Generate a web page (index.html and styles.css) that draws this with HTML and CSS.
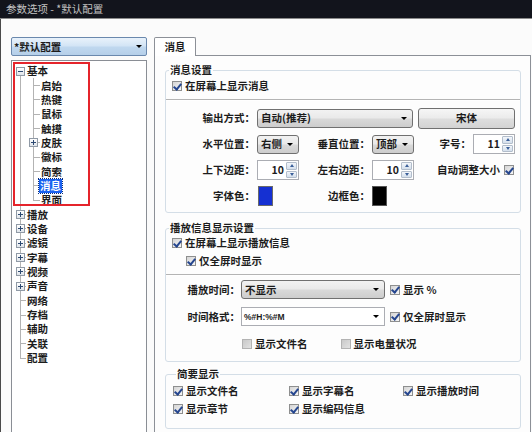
FILE: index.html
```html
<!DOCTYPE html>
<html lang="zh-CN">
<head>
<meta charset="utf-8">
<title>参数选项</title>
<link rel="stylesheet" href="styles.css">
</head>
<body>
<div class="win">
  <div class="titlebar">参数选项 - *默认配置</div>
  <div class="content">
    <div class="side">
      <div class="profile"><span>*默认配置</span><i class="arr"></i></div>
      <div class="tree">
        <div class="tr"><span class="g1 first"><i class="exp"></i></span><span class="lbl">基本</span></div>
        <div class="tr"><span class="g1 v"></span><span class="g2 t"></span><span class="lbl">启始</span></div>
        <div class="tr"><span class="g1 v"></span><span class="g2 t"></span><span class="lbl">热键</span></div>
        <div class="tr"><span class="g1 v"></span><span class="g2 t"></span><span class="lbl">鼠标</span></div>
        <div class="tr"><span class="g1 v"></span><span class="g2 t"></span><span class="lbl">触摸</span></div>
        <div class="tr"><span class="g1 v"></span><span class="g2 t"><i class="exp plus"></i></span><span class="lbl">皮肤</span></div>
        <div class="tr"><span class="g1 v"></span><span class="g2 t"></span><span class="lbl">徽标</span></div>
        <div class="tr"><span class="g1 v"></span><span class="g2 t"></span><span class="lbl">简索</span></div>
        <div class="tr"><span class="g1 v"></span><span class="g2 t"></span><span class="lbl sel">消息</span></div>
        <div class="tr"><span class="g1 v"></span><span class="g2 l"></span><span class="lbl">界面</span></div>
        <div class="tr"><span class="g1 t"><i class="exp plus"></i></span><span class="lbl">播放</span></div>
        <div class="tr"><span class="g1 t"><i class="exp plus"></i></span><span class="lbl">设备</span></div>
        <div class="tr"><span class="g1 t"><i class="exp plus"></i></span><span class="lbl">滤镜</span></div>
        <div class="tr"><span class="g1 t"><i class="exp plus"></i></span><span class="lbl">字幕</span></div>
        <div class="tr"><span class="g1 t"><i class="exp plus"></i></span><span class="lbl">视频</span></div>
        <div class="tr"><span class="g1 t"><i class="exp plus"></i></span><span class="lbl">声音</span></div>
        <div class="tr"><span class="g1 t"></span><span class="lbl leaf">网络</span></div>
        <div class="tr"><span class="g1 t"></span><span class="lbl leaf">存档</span></div>
        <div class="tr"><span class="g1 t"></span><span class="lbl leaf">辅助</span></div>
        <div class="tr"><span class="g1 t"></span><span class="lbl leaf">关联</span></div>
        <div class="tr"><span class="g1 l"></span><span class="lbl leaf">配置</span></div>
        <div class="redbox"></div>
      </div>
    </div>
    <div class="main">
      <div class="tabs"><div class="tab">消息</div><div class="tabfill"></div></div>
      <div class="panel">
        <fieldset class="grp grp1">
          <legend>消息设置</legend>
          <div class="chk first"><i class="cb on"></i>在屏幕上显示消息</div>
          <div class="sep"></div>
          <div class="form1">
            <span class="lab">输出方式：</span>
            <div class="dd wide"><span>自动(推荐)</span><i class="arr"></i></div>
            <div class="btn">宋体</div>

            <span class="lab">水平位置：</span>
            <div class="dd small"><span>右侧</span><i class="arr"></i></div>
            <span class="lab">垂直位置：</span>
            <div class="dd small"><span>顶部</span><i class="arr"></i></div>
            <span class="lab">字号：</span>
            <div class="spin"><span>11</span><i class="sb"><b class="up"></b><b class="dn"></b></i></div>

            <span class="lab">上下边距：</span>
            <div class="spin"><span>10</span><i class="sb"><b class="up"></b><b class="dn"></b></i></div>
            <span class="lab">左右边距：</span>
            <div class="spin"><span>10</span><i class="sb"><b class="up"></b><b class="dn"></b></i></div>
            <div class="auto">自动调整大小<i class="cb on"></i></div>

            <span class="lab">字体色：</span>
            <div class="swatch blue"></div>
            <span class="lab">边框色：</span>
            <div class="swatch black"></div>
          </div>
        </fieldset>

        <fieldset class="grp grp2">
          <legend>播放信息显示设置</legend>
          <div class="chk first"><i class="cb on"></i>在屏幕上显示播放信息</div>
          <div class="chk sub"><i class="cb on"></i>仅全屏时显示</div>
          <div class="sep"></div>
          <div class="form2">
            <span class="lab">播放时间：</span>
            <div class="dd"><span>不显示</span><i class="arr"></i></div>
            <div class="chk"><i class="cb on"></i>显示 %</div>

            <span class="lab">时间格式：</span>
            <div class="combo"><span>%#H:%#M</span><i class="arr"></i></div>
            <div class="chk"><i class="cb on"></i>仅全屏时显示</div>

            <div class="optrow">
              <div class="chk"><i class="cb off"></i>显示文件名</div>
              <div class="chk"><i class="cb off"></i>显示电量状况</div>
            </div>
          </div>
        </fieldset>

        <fieldset class="grp grp3">
          <legend>简要显示</legend>
          <div class="form3">
            <div class="chk"><i class="cb on"></i>显示文件名</div>
            <div class="chk"><i class="cb on"></i>显示字幕名</div>
            <div class="chk"><i class="cb on"></i>显示播放时间</div>
            <div class="chk"><i class="cb on"></i>显示章节</div>
            <div class="chk"><i class="cb on"></i>显示编码信息</div>
          </div>
        </fieldset>
      </div>
    </div>
  </div>
</div>
</body>
</html>
```

FILE: styles.css
```css
* { box-sizing: border-box; }

html, body {
  margin: 0;
  padding: 0;
}

body {
  width: 532px;
  height: 432px;
  overflow: hidden;
  background: #fbfbfb;
  font-family: "Noto Sans CJK SC", "Noto Sans", sans-serif;
  font-size: 10.5px;
  font-weight: 700;
  color: #1c1c1c;
  line-height: 14px;
}

.win {
  height: 432px;
  display: flex;
  flex-direction: column;
}

.titlebar {
  height: 19px;
  flex: none;
  background: #12141c;
  border-bottom: 1px solid #8b8b8b;
  color: #c2c2c2;
  padding-left: 6px;
  line-height: 18px;
  font-weight: 400;
}

.content {
  flex: 1;
  display: flex;
  gap: 7px;
  padding: 18px 0 0 10px;
  border-left: 1px solid #4a4a4a;
  min-height: 0;
}

/* ---------- left side ---------- */
.side {
  width: 136px;
  flex: none;
  display: flex;
  flex-direction: column;
}

.profile {
  height: 19px;
  flex: none;
  border: 1px solid #6a88ad;
  border-radius: 2px;
  background: linear-gradient(#e9f2fb, #d2e4f5 48%, #c0d8ef 52%, #b5cfe9);
  display: flex;
  align-items: center;
  justify-content: space-between;
  padding: 0 4px 0 2px;
}

.arr {
  width: 0;
  height: 0;
  border-left: 3px solid transparent;
  border-right: 3px solid transparent;
  border-top: 3px solid #000;
  flex: none;
}

.tree {
  position: relative;
  flex: 1;
  margin-top: 4px;
  border: 1px solid #8a8e95;
  border-bottom: none;
  background: #fff;
  padding-top: 3px;
}

.tr {
  display: flex;
  align-items: center;
  height: 14.35px;
}

.g1, .g2 {
  width: 14px;
  height: 100%;
  flex: none;
  display: flex;
  align-items: center;
}

.g1 .exp { margin-left: 4px; }
.g2 .exp { margin-left: 3px; }

.g1.first {
  background: linear-gradient(#b3b3b3, #b3b3b3) 8px 100% / 1px 50% no-repeat;
}
.g1.v {
  background: linear-gradient(#b3b3b3, #b3b3b3) 8px 0 / 1px 100% no-repeat;
}
.g1.t {
  background:
    linear-gradient(#b3b3b3, #b3b3b3) 8px 0 / 1px 100% no-repeat,
    linear-gradient(#b3b3b3, #b3b3b3) 8px 50% / 6px 1px no-repeat;
}
.g1.l {
  background:
    linear-gradient(#b3b3b3, #b3b3b3) 8px 0 / 1px 50% no-repeat,
    linear-gradient(#b3b3b3, #b3b3b3) 8px 50% / 6px 1px no-repeat;
}
.g2.t {
  background:
    linear-gradient(#b3b3b3, #b3b3b3) 7px 0 / 1px 100% no-repeat,
    linear-gradient(#b3b3b3, #b3b3b3) 7px 50% / 7px 1px no-repeat;
}
.g2.l {
  background:
    linear-gradient(#b3b3b3, #b3b3b3) 7px 0 / 1px 50% no-repeat,
    linear-gradient(#b3b3b3, #b3b3b3) 7px 50% / 7px 1px no-repeat;
}

.exp {
  width: 9px;
  height: 9px;
  flex: none;
  border: 1px solid #909aa6;
  background:
    linear-gradient(#2d4a72, #2d4a72) center / 5px 1px no-repeat,
    linear-gradient(#ffffff, #dfe4ea);
}
.exp.plus {
  background:
    linear-gradient(#2d4a72, #2d4a72) center / 5px 1px no-repeat,
    linear-gradient(#2d4a72, #2d4a72) center / 1px 5px no-repeat,
    linear-gradient(#ffffff, #dfe4ea);
}

.lbl {
  padding: 0 1px;
  white-space: nowrap;
}
.lbl.sel {
  background: #1a62f0;
  color: #fff;
  padding: 0 1px;
  margin-left: -1px;
  outline: 1px dotted #0a2d7a;
}

.redbox {
  position: absolute;
  left: 1px;
  top: 1px;
  width: 77px;
  height: 144px;
  border: 2px solid #e5242b;
  pointer-events: none;
}

/* ---------- right side ---------- */
.main {
  width: 377px;
  flex: none;
  display: flex;
  flex-direction: column;
}

.tabs {
  display: flex;
  height: 19px;
  flex: none;
}
.tab {
  width: 42px;
  border: 1px solid #8c9097;
  border-bottom: none;
  border-radius: 2px 2px 0 0;
  background: #fff;
  text-align: center;
  line-height: 18px;
}
.tabfill {
  flex: 1;
  border-bottom: 1px solid #8c9097;
}

.panel {
  flex: 1;
  border-left: 1px solid #8c9097;
  border-right: 1px solid #8c9097;
  background: #fdfdfd;
  padding: 0 9px 0 10px;
}

.grp {
  margin: 0;
  border: 1px solid #d4dee7;
  border-radius: 3px;
  padding: 0;
  min-width: 0;
}
.grp legend {
  padding: 0 1px;
  margin-left: 3px;
  line-height: 14px;
}
.grp1 { margin-top: 7px; padding-bottom: 6px; }
.grp2 { margin-top: 8px; padding-bottom: 8px; }
.grp3 { margin-top: 5px; padding: 3px 0 12px 7px; }

.chk {
  display: flex;
  align-items: center;
  gap: 3px;
  height: 14px;
  white-space: nowrap;
}
.chk.first { margin: 2px 0 0 6px; }
.grp2 .chk.first { margin-top: 1px; }
.chk.sub { margin: 4px 0 0 20px; }

.cb {
  width: 10px;
  height: 10px;
  flex: none;
  display: inline-flex;
  align-items: center;
  justify-content: center;
  border: 1px solid #8e8f8f;
  background: linear-gradient(135deg, #d5d5d5, #f6f6f6);
}
.cb.on::after {
  content: "";
  width: 3px;
  height: 6px;
  margin-top: -1px;
  border: solid #25468f;
  border-width: 0 2px 2px 0;
  transform: rotate(40deg);
}
.cb.off {
  border-color: #b3b3b3;
  background: linear-gradient(135deg, #c9c9c9, #e2e2e2);
}

.sep {
  margin-top: 6px;
  height: 2px;
  border-top: 1px solid #b4b4b4;
  border-bottom: 1px solid #ffffff;
}

.form1 {
  display: grid;
  grid-template-columns: 91px 44px 71px 41px 60px 42px;
  grid-auto-rows: 20px;
  row-gap: 6px;
  margin-top: 7px;
  align-items: center;
}

.lab {
  text-align: right;
  padding-right: 2px;
  white-space: nowrap;
}

.dd {
  height: 19px;
  border: 1px solid #707070;
  border-radius: 3px;
  background: linear-gradient(#f2f2f2, #e9e9e9 48%, #d9d9d9 52%, #cdcdcd);
  display: flex;
  align-items: center;
  justify-content: space-between;
  padding: 0 5px 0 3px;
  white-space: nowrap;
}
.dd.wide { grid-column: 2 / span 3; }
.dd.small { width: 42px; }
.form1 .dd.small:nth-of-type(1) { margin-left: 1px; }

.btn {
  grid-column: 5 / span 2;
  margin-left: 5px;
  height: 21px;
  border: 1px solid #707070;
  border-radius: 3px;
  background: linear-gradient(#f6f6f6, #ebebeb 48%, #dedede 52%, #d3d3d3);
  display: flex;
  align-items: center;
  justify-content: center;
}

.spin {
  height: 20px;
  width: 42px;
  display: flex;
  border: 1px solid #abadb3;
  background: #fff;
}
.spin span {
  flex: 1;
  text-align: right;
  padding-right: 2px;
  line-height: 18px;
}
.sb {
  width: 12px;
  flex: none;
  display: flex;
  flex-direction: column;
  gap: 1px;
  padding: 1px 1px 1px 0;
}
.sb b {
  flex: 1;
  display: flex;
  align-items: center;
  justify-content: center;
  border: 1px solid #b2bdcb;
  border-radius: 1px;
  background: linear-gradient(#f3f6fa, #d4dfec);
}
.sb .up::after {
  content: "";
  border-left: 2.5px solid transparent;
  border-right: 2.5px solid transparent;
  border-bottom: 3px solid #3b5f99;
}
.sb .dn::after {
  content: "";
  border-left: 2.5px solid transparent;
  border-right: 2.5px solid transparent;
  border-top: 3px solid #3b5f99;
}

.auto {
  grid-column: 5 / span 2;
  justify-self: end;
  margin-right: 1px;
  display: flex;
  align-items: center;
  gap: 4px;
  white-space: nowrap;
}

.swatch {
  width: 15px;
  height: 20px;
  border: 1px solid #6a6a6a;
}
.swatch.blue { background: #1530d2; margin-left: 1px; }
.swatch.black { background: #000; border-color: #555; }

.form2 {
  display: grid;
  grid-template-columns: 75px 144px auto;
  grid-auto-rows: 19px;
  row-gap: 8px;
  column-gap: 0;
  margin-top: 4px;
  align-items: center;
}
.form2 .lab { padding-right: 1px; }
.form2 .dd, .form2 .combo { width: 144px; }
.form2 > .chk { margin-left: 5px; }

.combo {
  height: 19px;
  border: 1px solid #abadb3;
  background: #fff;
  display: flex;
  align-items: center;
  justify-content: space-between;
  padding: 0 5px 0 2px;
  font-family: "Liberation Sans", "Noto Sans", sans-serif;
  font-size: 8.5px;
}

.optrow {
  grid-column: 2 / span 2;
  display: flex;
  gap: 33px;
  margin-left: 1px;
}

.form3 {
  display: grid;
  grid-template-columns: 116px 114px auto;
  row-gap: 4px;
}
```
